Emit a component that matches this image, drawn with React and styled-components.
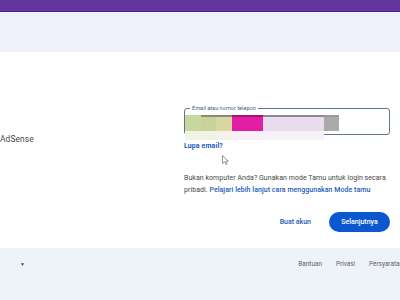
import styled, { createGlobalStyle } from 'styled-components';

const Global = createGlobalStyle`
  html, body {
    margin: 0;
    padding: 0;
    width: 400px;
    height: 300px;
    overflow: hidden;
    background: #ffffff;
    font-family: Roboto, "Liberation Sans", Arial, sans-serif;
  }
`;

const Page = styled.div`
  display: flex;
  flex-direction: column;
  width: 400px;
  height: 300px;
`;

const TopBar = styled.div`
  height: 11px;
  background: #6535a0;
  border-bottom: 1px solid #4a2683;
`;

const Band = styled.div`
  height: 40px;
  background: #eef1f9;
`;

const Main = styled.main`
  height: 196px;
  display: grid;
  grid-template-columns: 184px 206px;
  background: #ffffff;
`;

const Brand = styled.div`
  padding-top: 82px;
  font-size: 8.4px;
  color: #444746;
  letter-spacing: 0.1px;
`;

const Form = styled.div`
  display: flex;
  flex-direction: column;
  padding-top: 56px;
`;

const Field = styled.div`
  position: relative;
  height: 27px;
  box-sizing: border-box;
  border: 1px solid #5f7698;
  border-radius: 3px;
`;

const FieldLabel = styled.span`
  position: absolute;
  left: 5px;
  top: -4px;
  padding: 0 2px;
  background: #ffffff;
  font-size: 5.6px;
  line-height: 7px;
  color: #3f5f8c;
`;

const Blur = styled.div`
  position: absolute;
  left: 0;
  top: 6px;
  display: flex;
  flex-direction: column;
`;

const BlurRow = styled.div`
  display: flex;
  height: ${p => p.$h}px;
`;

const Block = styled.div`
  width: ${p => p.$w}px;
  background: ${p => p.$c};
  border-top: ${p => (p.$edge ? `2px solid ${p.$edge}` : 'none')};
`;

const Forgot = styled.a`
  margin-top: 7px;
  font-size: 7px;
  font-weight: 700;
  color: #1b5cb8;
  letter-spacing: 0.1px;
  text-decoration: none;
`;

const Pointer = styled.div`
  height: 14px;
  padding-left: 38px;
`;

const Note = styled.p`
  margin: 8px 0 0;
  font-size: 7px;
  line-height: 12px;
  color: #444746;
  letter-spacing: 0.05px;
`;

const Link = styled.a`
  color: #1b5cb8;
  font-weight: 500;
  text-decoration: none;
`;

const Actions = styled.div`
  display: flex;
  justify-content: flex-end;
  align-items: center;
  gap: 18px;
  margin-top: 16px;
`;

const TextButton = styled.button`
  border: none;
  background: none;
  padding: 0;
  font-family: inherit;
  font-size: 7px;
  font-weight: 500;
  color: #1b5cb8;
`;

const Primary = styled.button`
  width: 61px;
  height: 20px;
  border: none;
  border-radius: 10px;
  background: #0b57d0;
  color: #ffffff;
  font-family: inherit;
  font-size: 7px;
  font-weight: 500;
`;

const Footer = styled.footer`
  flex: 1;
  display: flex;
  align-items: flex-start;
  justify-content: space-between;
  padding-top: 12px;
  background: #eef2f9;
`;

const Lang = styled.div`
  padding-left: 20px;
  font-size: 5px;
  line-height: 8px;
  color: #444746;
`;

const FootLinks = styled.nav`
  display: flex;
  gap: 14px;
  margin-right: -3px;
`;

const FootLink = styled.a`
  font-size: 6.4px;
  line-height: 8px;
  color: #5f6368;
  text-decoration: none;
`;

const row1 = [
  { w: 16, c: '#c6d89d' },
  { w: 15, c: '#c9d29a', edge: '#8c8a74' },
  { w: 16, c: '#d9d7a1', edge: '#8c8a74' },
  { w: 31, c: '#e21fa4', edge: '#a01876' },
  { w: 61, c: '#eadcec', edge: '#8c8894' },
  { w: 15, c: '#aaaaaa', edge: '#9a9a9a' },
];

const row2 = [
  { w: 16, c: '#eff4e6' },
  { w: 15, c: '#f1f2e7' },
  { w: 16, c: '#f4f3ea' },
  { w: 31, c: '#f9eff6' },
  { w: 61, c: '#f7f2f7' },
];

export default function App() {
  return (
    <Page>
      <Global />
      <TopBar />
      <Band />
      <Main>
        <Brand>AdSense</Brand>
        <Form>
          <Field>
            <FieldLabel>Email atau nomor telepon</FieldLabel>
            <Blur>
              <BlurRow $h={16}>
                {row1.map((b, i) => (
                  <Block key={i} $w={b.w} $c={b.c} $edge={b.edge} />
                ))}
              </BlurRow>
              <BlurRow $h={9}>
                {row2.map((b, i) => (
                  <Block key={i} $w={b.w} $c={b.c} />
                ))}
              </BlurRow>
            </Blur>
          </Field>
          <Forgot href="#">Lupa email?</Forgot>
          <Pointer>
            <svg width="7" height="10" viewBox="0 0 7 10">
              <path d="M0.5 0.5 L0.5 8.5 L2.5 6.7 L4 9.5 L5.2 8.9 L3.8 6.2 L6.3 6.2 Z" fill="#ffffff" stroke="#6b6b6b" strokeWidth="0.7" />
            </svg>
          </Pointer>
          <Note>
            Bukan komputer Anda? Gunakan mode Tamu untuk login secara pribadi.{' '}
            <Link href="#">Pelajari lebih lanjut cara menggunakan Mode tamu</Link>
          </Note>
          <Actions>
            <TextButton>Buat akun</TextButton>
            <Primary>Selanjutnya</Primary>
          </Actions>
        </Form>
      </Main>
      <Footer>
        <Lang>▼</Lang>
        <FootLinks>
          <FootLink href="#">Bantuan</FootLink>
          <FootLink href="#">Privasi</FootLink>
          <FootLink href="#">Persyaratan</FootLink>
        </FootLinks>
      </Footer>
    </Page>
  );
}
